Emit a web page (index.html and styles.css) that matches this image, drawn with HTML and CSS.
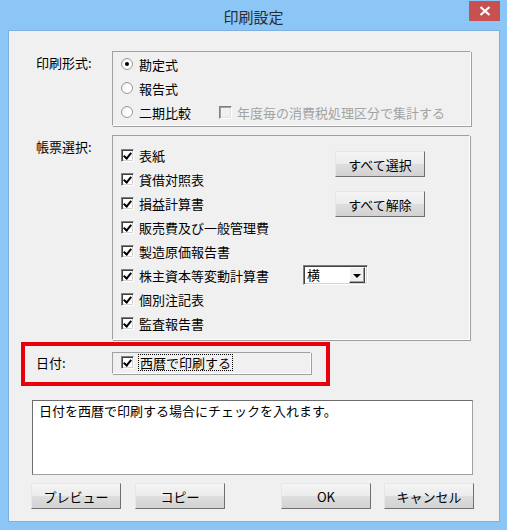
FILE: index.html
```html
<!DOCTYPE html>
<html>

<head>
    <title>印刷設定</title>
    <link rel="stylesheet" href="styles.css">
</head>

<body>
    <div class="window">
        <div class="titlebar">
            <span class="title">印刷設定</span>
            <div class="close">
                <svg width="12" height="10" viewBox="0 0 12 10">
                    <path d="M1.5 1 L10.5 9 M10.5 1 L1.5 9" stroke="#fff" stroke-width="2.2" fill="none" />
                </svg>
            </div>
        </div>
        <div class="content">
            <div class="field first">
                <div class="label">印刷形式:</div>
                <div class="box box_format">
                    <div class="line"><span class="radio checked"></span>勘定式</div>
                    <div class="line"><span class="radio"></span>報告式</div>
                    <div class="line">
                        <span class="radio"></span>二期比較
                        <span class="check disabled"></span><span class="dim">年度毎の消費税処理区分で集計する</span>
                    </div>
                </div>
            </div>
            <div class="field second">
                <div class="label">帳票選択:</div>
                <div class="box box_forms">
                    <div class="line r1"><span class="check on"></span>表紙</div>
                    <div class="line r2"><span class="check on"></span>貸借対照表</div>
                    <div class="line r3"><span class="check on"></span>損益計算書</div>
                    <div class="line r4"><span class="check on"></span>販売費及び一般管理費</div>
                    <div class="line r5"><span class="check on"></span>製造原価報告書</div>
                    <div class="line r6"><span class="check on"></span>株主資本等変動計算書</div>
                    <div class="line r7"><span class="check on"></span>個別注記表</div>
                    <div class="line r8"><span class="check on"></span>監査報告書</div>
                    <div class="btn btn_all">すべて選択</div>
                    <div class="btn btn_none">すべて解除</div>
                    <div class="combo">
                        <span class="combo_text">横</span>
                        <span class="combo_arrow"></span>
                    </div>
                </div>
            </div>
            <div class="highlight">
                <div class="label">日付:</div>
                <div class="box box_date">
                    <div class="line"><span class="check on"></span><span class="focus">西暦で印刷する</span></div>
                </div>
            </div>
            <div class="description">日付を西暦で印刷する場合にチェックを入れます。</div>
            <div class="actions">
                <div class="btn">プレビュー</div>
                <div class="btn">コピー</div>
                <div class="btn btn_ok">OK</div>
                <div class="btn">キャンセル</div>
            </div>
        </div>
    </div>
</body>

</html>
```

FILE: styles.css
```css
body {
    margin: 0;
    font-family: "Noto Sans CJK JP", "Liberation Sans", sans-serif;
    font-size: 13px;
    color: #000;
}

.window {
    width: 507px;
    height: 530px;
    background-color: #8cc6f6;
    display: flex;
    flex-direction: column;
}

.titlebar {
    height: 30px;
    display: flex;
    justify-content: center;
    align-items: center;
    position: relative;
}

.title {
    font-size: 15px;
    color: #2b2b2b;
    padding-top: 2px;
}

.close {
    position: absolute;
    top: 1px;
    right: 7px;
    width: 31px;
    height: 20px;
    background-color: #c75050;
    display: flex;
    justify-content: center;
    align-items: center;
}

.content {
    flex: 1;
    margin: 0 7px 8px 8px;
    background-color: #f0f0f0;
    border: 1px solid #7fb0de;
}

.field {
    display: flex;
    margin-left: 27px;
}

.first {
    margin-top: 20px;
}

.second {
    margin-top: 9px;
}

.label {
    width: 76px;
    line-height: 24px;
}

.box {
    box-sizing: border-box;
    border: 1px solid #a0a0a0;
    border-right-color: #fff;
    border-bottom-color: #fff;
    box-shadow: 1px 1px 0 #a0a0a0;
}

.box_format {
    width: 359px;
    height: 75px;
    padding: 0 0 4px 8px;
}

.line {
    height: 24px;
    display: flex;
    align-items: center;
    white-space: nowrap;
}

.radio {
    width: 10px;
    height: 10px;
    border-radius: 50%;
    border: 1px solid #9a9a9a;
    background: radial-gradient(circle at 60% 60%, #fff 40%, #dedede 100%);
    margin-right: 6px;
    display: flex;
    justify-content: center;
    align-items: center;
}

.radio.checked::after {
    content: "";
    width: 4px;
    height: 4px;
    border-radius: 50%;
    background-color: #000;
}

.check {
    box-sizing: border-box;
    width: 13px;
    height: 13px;
    border: 1px solid;
    border-color: #808080 #fff #fff #808080;
    box-shadow: inset 1px 1px 0 #404040, inset -1px -1px 0 #d4d4d4;
    background-color: #fff;
    margin-right: 5px;
    position: relative;
}

.check.on::after {
    content: "";
    position: absolute;
    left: 3px;
    top: 1px;
    width: 3px;
    height: 6px;
    border-right: 2px solid #000;
    border-bottom: 2px solid #000;
    transform: rotate(40deg);
}

.check.disabled {
    margin-left: 28px;
    background-color: #f0f0f0;
    box-shadow: inset 1px 1px 0 #a0a0a0, inset -1px -1px 0 #e3e3e3;
}

.dim {
    color: #a3a3a3;
}

.box_forms {
    width: 358px;
    height: 205px;
    padding: 7px 0 6px 8px;
    display: grid;
    grid-template-columns: 182px 32px 90px;
    grid-template-rows: repeat(8, 24px);
}

.box_forms .line {
    grid-column: 1;
}

.r1 { grid-row: 1; }
.r2 { grid-row: 2; }
.r3 { grid-row: 3; }
.r4 { grid-row: 4; }
.r5 { grid-row: 5; }
.r6 { grid-row: 6; }
.r7 { grid-row: 7; }
.r8 { grid-row: 8; }

.btn {
    box-sizing: border-box;
    width: 90px;
    height: 26px;
    border: 1px solid;
    border-color: #e6e6e6 #707070 #707070 #e6e6e6;
    background: linear-gradient(#f4f4f4, #ececec 50%, #dedede 50%, #d2d2d2);
    display: flex;
    justify-content: center;
    align-items: center;
    white-space: nowrap;
}

.btn_all {
    grid-column: 3;
    grid-row: 1 / 3;
    margin-top: 8px;
}

.btn_none {
    grid-column: 3;
    grid-row: 3 / 5;
}

.combo {
    grid-column: 2 / 4;
    grid-row: 6;
    align-self: center;
    box-sizing: border-box;
    width: 65px;
    height: 20px;
    border: 1px solid;
    border-color: #808080 #fff #fff #808080;
    box-shadow: inset 1px 1px 0 #404040, inset -1px -1px 0 #d4d4d4;
    background-color: #fff;
    display: flex;
    align-items: center;
    padding: 2px;
}

.combo_text {
    flex: 1;
    padding-left: 1px;
    line-height: 14px;
}

.combo_arrow {
    box-sizing: border-box;
    width: 16px;
    height: 16px;
    background-color: #f0f0f0;
    border: 1px solid;
    border-color: #fff #404040 #404040 #fff;
    box-shadow: inset -1px -1px 0 #a0a0a0;
    display: flex;
    justify-content: center;
    align-items: center;
}

.combo_arrow::after {
    content: "";
    border-left: 4px solid transparent;
    border-right: 4px solid transparent;
    border-top: 4px solid #000;
    margin-top: 1px;
}

.highlight {
    box-sizing: border-box;
    display: flex;
    align-items: center;
    width: 309px;
    height: 44px;
    margin: 2px 0 0 12px;
    padding: 1px 0 4px 11px;
    border: 4px solid #e8000b;
}

.box_date {
    width: 199px;
    height: 22px;
    padding-left: 8px;
    display: flex;
    align-items: center;
}

.box_date .line {
    height: 22px;
}

.focus {
    outline: 1px dotted #000;
    line-height: 15px;
    padding: 0 1px;
}

.description {
    box-sizing: border-box;
    width: 441px;
    height: 75px;
    margin: 14px 0 0 23px;
    background-color: #fff;
    border: 1px solid #6d6d6d;
    border-right-color: #a0a0a0;
    border-bottom-color: #a0a0a0;
    padding: 1px 6px;
    line-height: 17px;
}

.actions {
    display: flex;
    margin: 8px 0 0 22px;
    gap: 14px;
}

.btn_ok {
    margin-left: 42px;
}

.actions .btn:last-child {
    margin-left: -1px;
}
```
